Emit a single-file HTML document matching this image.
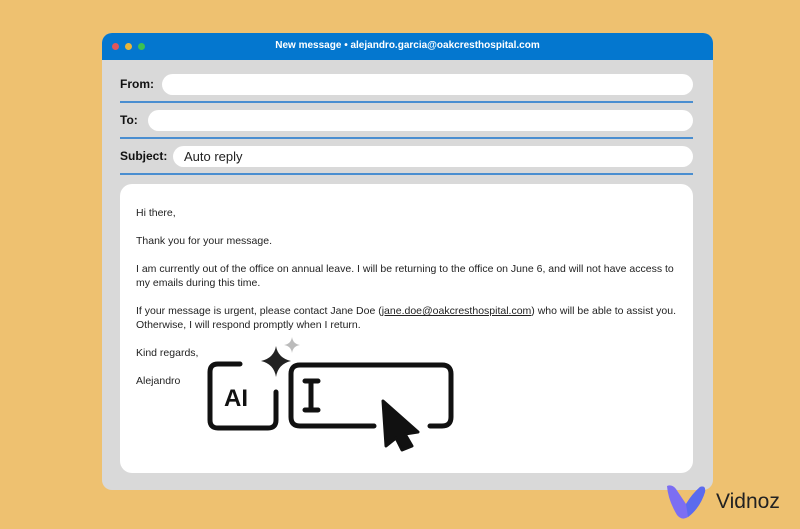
<!DOCTYPE html>
<html><head><style>
body{margin:0;width:800px;height:529px;background:#EEC170;font-family:"Liberation Sans",sans-serif;position:relative;overflow:hidden}
.win{position:absolute;left:102px;top:33px;width:611px;height:457px;background:#D9D9D9;border-radius:10px;overflow:hidden}
.bar{height:27px;background:#0477CF;color:#fff;font-weight:bold;font-size:10px;text-align:center;line-height:25px}
.dot{position:absolute;top:10px;width:7px;height:7px;border-radius:50%}
.lbl{position:absolute;font-weight:bold;font-size:12px;color:#111}
.inp{position:absolute;background:#fff;border-radius:11px;height:21px;right:20px;font-size:13px;line-height:21px;color:#222}
.ln{position:absolute;left:18px;right:20px;height:2px;background:#4A8ED0}
.body{position:absolute;left:18px;top:151px;width:573px;height:289px;background:#fff;border-radius:12px}
.body p{position:absolute;left:16px;margin:0;font-size:10.5px;line-height:14px;color:#222;width:545px}
.logo{position:absolute;left:716px;top:490px;font-size:21px;color:#222}
</style></head><body>
<div class="win">
<div class="bar">New message • alejandro.garcia@oakcresthospital.com</div>
<div class="dot" style="left:10px;background:#E0565A"></div>
<div class="dot" style="left:23px;background:#E8B53A"></div>
<div class="dot" style="left:36px;background:#3CC152"></div>
<div class="lbl" style="left:18px;top:44px">From:</div><div class="inp" style="left:60px;top:41px"></div><div class="ln" style="top:68px"></div>
<div class="lbl" style="left:18px;top:80px">To:</div><div class="inp" style="left:46px;top:77px"></div><div class="ln" style="top:104px"></div>
<div class="lbl" style="left:18px;top:116px">Subject:</div><div class="inp" style="left:71px;top:113px;padding-left:11px">Auto reply</div><div class="ln" style="top:140px"></div>
<div class="body">
<p style="top:22px">Hi there,</p>
<p style="top:50px">Thank you for your message.</p>
<p style="top:78px">I am currently out of the office on annual leave. I will be returning to the office on June 6, and will not have access to my emails during this time.</p>
<p style="top:120px">If your message is urgent, please contact Jane Doe (<u>jane.doe@oakcresthospital.com</u>) who will be able to assist you. Otherwise, I will respond promptly when I return.</p>
<p style="top:162px">Kind regards,</p>
<p style="top:190px">Alejandro</p>
</div>
</div>
<svg style="position:absolute;left:0;top:0" width="800" height="529">
<g fill="none" stroke="#111" stroke-width="5" stroke-linecap="round">
<path d="M276 392 V420 Q276 428 268 428 H218 Q210 428 210 420 V372 Q210 364 218 364 H240"/>
<path d="M374 426 H300 Q291 426 291 417 V374 Q291 365 300 365 H442 Q451 365 451 374 V417 Q451 426 442 426 H430"/>
</g>
<text x="224" y="406" font-family="Liberation Sans" font-weight="bold" font-size="24" fill="#111">AI</text>
<path d="M305 381h13M311 381v29M305 410h13" stroke="#111" stroke-width="5" stroke-linecap="round"/>
<path d="M276 346 Q278 358 291 361 Q278 364 276 377 Q274 364 261 361 Q274 358 276 346Z" fill="#222"/>
<path d="M292 337 Q293 344 300 345 Q293 346 292 353 Q291 346 284 345 Q291 344 292 337Z" fill="#bbb"/>
<path d="M383 401 L418 432 L405 434 L412 446 L402 450 L396 438 L386 446 Z" fill="#111" stroke="#111" stroke-width="3" stroke-linejoin="round"/>
<path d="M667 486 Q672 484 676 489 L686 504 Q692 494 700 487 Q706 485 705 492 Q700 508 688 517 Q682 521 677 515 Q668 500 667 486Z" fill="#7C6EF2"/>
<path d="M686 504 Q692 494 700 487 Q706 485 705 492 Q700 508 688 517Z" fill="#5B6BEE"/>
</svg>
<div class="logo">Vidnoz</div>
</body></html>
